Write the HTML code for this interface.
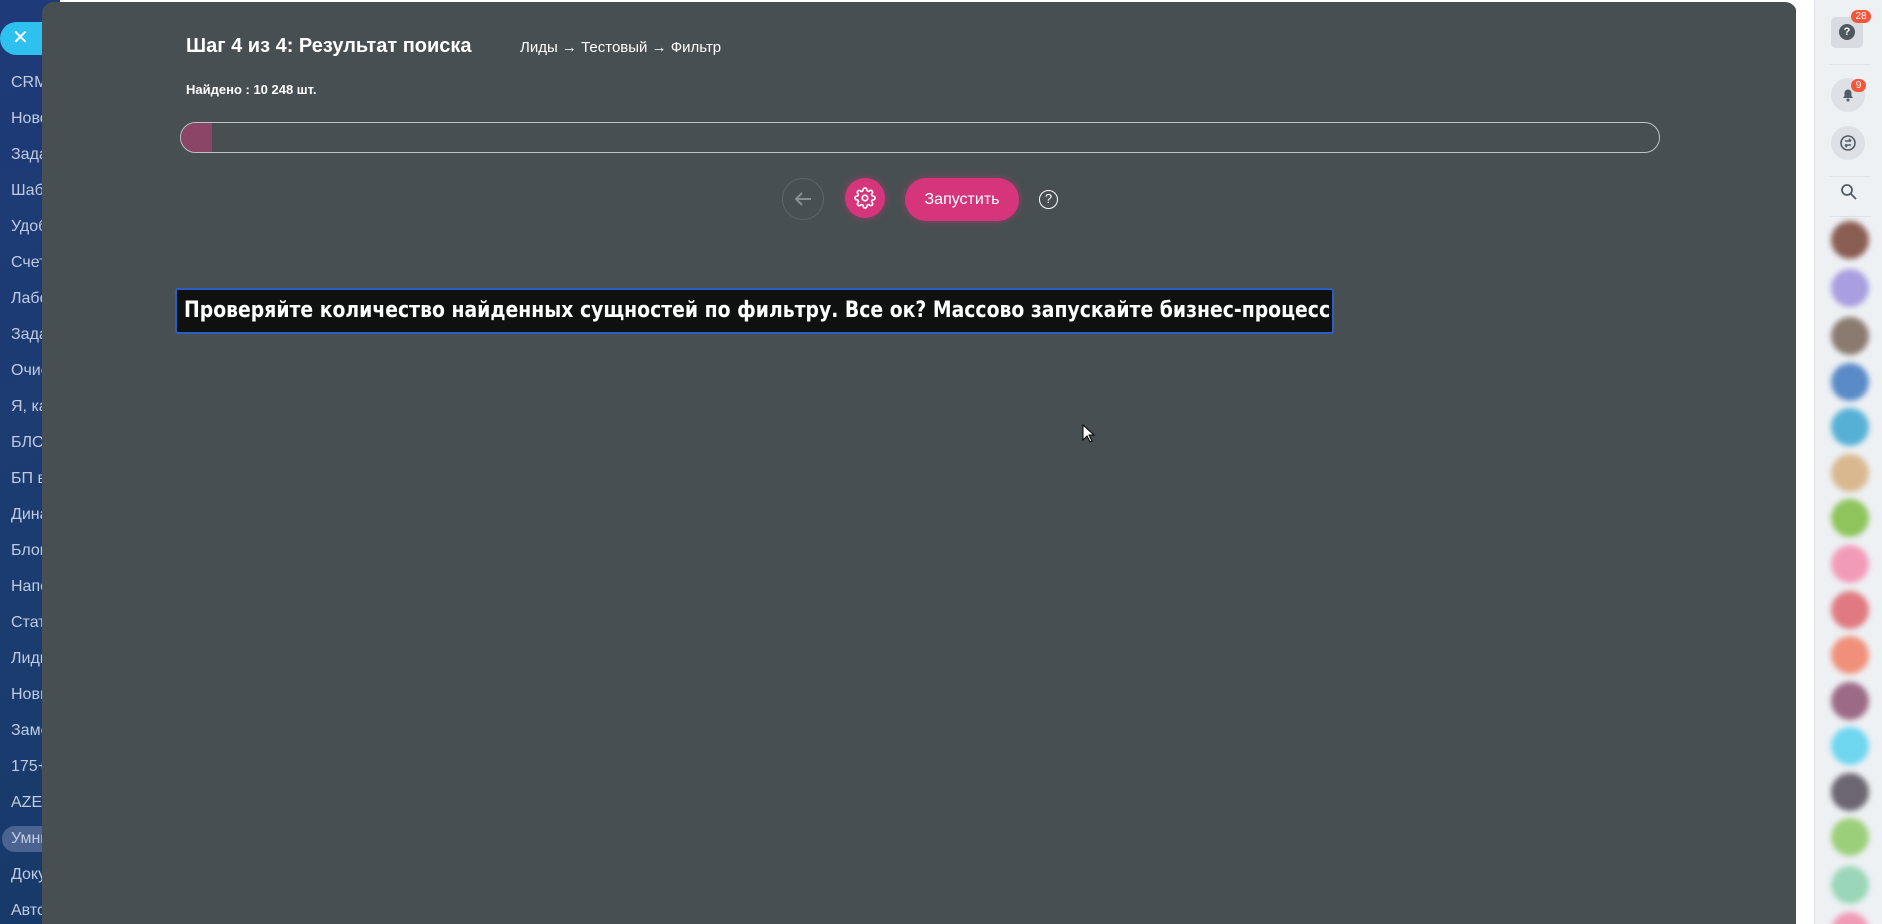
<!DOCTYPE html>
<html><head><meta charset="utf-8"><style>
*{margin:0;padding:0;box-sizing:border-box}
html,body{width:1882px;height:924px;overflow:hidden}
body{background:#fff;font-family:"Liberation Sans",sans-serif;position:relative}
.sb{position:absolute;left:0;top:0;width:60px;height:924px;background:linear-gradient(160deg,#1e3a78,#1b3c70 60%,#173a6a)}
.sb div{position:absolute;left:11px;color:#c0cbe0;font-size:16px;white-space:nowrap}
.close{position:absolute;left:0;top:22px;width:60px;height:33px;border-radius:17px;background:#2ec0ef;color:#fff;font-size:20px;padding-left:12px;line-height:33px}
.modal{position:absolute;left:42px;top:2px;width:1755px;height:922px;background:#484f52;border-radius:12px 12px 0 0}
.strip{position:absolute;left:1796px;top:0;width:18px;height:924px;background:#fff}
.rp{position:absolute;left:1814px;top:0;width:68px;height:924px;background:#eef1f4;border-left:1px solid #dde2e7;overflow:hidden}
.av{position:absolute;left:16px;width:38px;height:38px;border-radius:50%;filter:blur(3px)}
.sep{position:absolute;left:14px;width:42px;height:1px;background:#dfe3e8}
.abs{position:absolute}
</style></head><body>
<div class="sb">
<div style="top:74px">CRM</div><div style="top:110px">Новости</div><div style="top:146px">Задачи</div><div style="top:182px">Шаблоны</div><div style="top:218px">Удобно</div><div style="top:254px">Счета</div><div style="top:290px">Лаборатория</div><div style="top:326px">Задачи</div><div style="top:362px">Очистка</div><div style="top:398px">Я, как</div><div style="top:434px">БЛОГ</div><div style="top:470px">БП в</div><div style="top:506px">Динамика</div><div style="top:542px">Блоки</div><div style="top:578px">Напоминания</div><div style="top:614px">Статьи</div><div style="top:650px">Лиды</div><div style="top:686px">Новые</div><div style="top:722px">Заметки</div><div style="top:758px">175+</div><div style="top:794px">AZEX</div>
<div style="top:826px;left:2px;width:56px;height:26px;border-radius:13px;background:#4a6390"></div>
<div style="top:830px">Умные</div><div style="top:866px">Документы</div><div style="top:902px">Автоматизация</div>
</div>
<div class="close">✕</div>
<div class="modal">
<div class="abs" style="left:144px;top:33px;color:#fff;font-weight:bold;font-size:20px">Шаг 4 из 4: Результат поиска</div>
<div class="abs" style="left:478px;top:37px;color:#fff;font-size:15px">Лиды → Тестовый → Фильтр</div>
<div class="abs" style="left:144px;top:80px;color:#fff;font-weight:bold;font-size:13px">Найдено : 10 248 шт.</div>
<div class="abs" style="left:138px;top:120px;width:1480px;height:31px;border:1.5px solid #bfc3c6;border-radius:16px;overflow:hidden"><div style="width:31px;height:100%;background:#8b4566"></div></div>
<div class="abs" style="left:740px;top:176px;width:42px;height:42px;border-radius:50%;border:1px solid #5e6568"></div>
<svg class="abs" style="left:749px;top:185px" width="24" height="24" viewBox="0 0 24 24"><path d="M20 12H5M11 6l-6 6 6 6" fill="none" stroke="#8a9092" stroke-width="2"/></svg>
<div class="abs" style="left:803px;top:176px;width:40px;height:40px;border-radius:50%;background:#d6357c;box-shadow:0 0 8px rgba(214,53,124,.5)"></div>
<svg class="abs" style="left:812px;top:185px" width="22" height="22" viewBox="0 0 24 24" fill="none" stroke="#fff" stroke-width="1.8"><circle cx="12" cy="12" r="3"/><path d="M19.4 15a1.65 1.65 0 0 0 .33 1.820l.06.06a2 2 0 1 1-2.83 2.83l-.06-.06a1.65 1.65 0 0 0-1.82-.33 1.65 1.65 0 0 0-1 1.51V21a2 2 0 1 1-4 0v-.09A1.65 1.65 0 0 0 9 19.4a1.65 1.65 0 0 0-1.82.33l-.06.06a2 2 0 1 1-2.830-2.830l.06-.06A1.65 1.65 0 0 0 4.68 15a1.65 1.65 0 0 0-1.51-1H3a2 2 0 1 1 0-4h.09A1.65 1.65 0 0 0 4.6 9a1.65 1.65 0 0 0-.33-1.82l-.06-.06a2 2 0 1 1 2.83-2.83l.06.06A1.65 1.65 0 0 0 9 4.68a1.65 1.65 0 0 0 1-1.51V3a2 2 0 1 1 4 0v.09a1.65 1.65 0 0 0 1 1.51 1.65 1.65 0 0 0 1.82-.33l.06-.06a2 2 0 1 1 2.83 2.83l-.06.06A1.65 1.65 0 0 0 19.4 9a1.65 1.65 0 0 0 1.51 1H21a2 2 0 1 1 0 4h-.09a1.65 1.65 0 0 0-1.51 1z"/></svg>
<div class="abs" style="left:863px;top:176px;width:114px;height:43px;border-radius:22px;background:#d6357c;box-shadow:0 0 8px rgba(214,53,124,.5);color:#fff;font-size:16px;text-align:center;line-height:43px">Запустить</div>
<div class="abs" style="left:997px;top:188px;width:19px;height:19px;border-radius:50%;border:1.5px solid #fff;color:#fff;font-size:13px;text-align:center;line-height:16px">?</div>
<div class="abs" style="left:133px;top:286px;width:1159px;height:46px;background:#0f1110;border:2px solid #2b5fbf;border-radius:3px;color:#fff;font-family:'DejaVu Sans',sans-serif;font-weight:bold;font-size:22px;line-height:42px;padding-left:7px;white-space:nowrap;overflow:hidden"><span style="display:inline-block;transform:scaleX(.855);transform-origin:left">Проверяйте количество найденных сущностей по фильтру. Все ок? Массово запускайте бизнес-процесс</span></div>
<svg class="abs" style="left:1040px;top:422px" width="14" height="20" viewBox="0 0 14 20"><path d="M1 1v15l4-4 3 6 2-1-3-6h5z" fill="#fff" stroke="#000" stroke-width="1"/></svg>
</div>
<div class="strip"></div>
<div class="rp">
<div class="abs" style="left:16px;top:17px;width:32px;height:31px;border-radius:5px;background:#d8dce0"></div>
<div class="abs" style="left:24px;top:24px;width:16px;height:16px;border-radius:50%;background:#4f5861;color:#fff;font-size:11px;font-weight:bold;text-align:center;line-height:16px">?</div>
<div class="abs" style="left:36px;top:10px;width:20px;height:13px;border-radius:7px;background:#f4563a;color:#fff;font-size:10px;text-align:center;line-height:13px">28</div>
<div class="sep" style="top:64px"></div>
<div class="abs" style="left:16px;top:78px;width:34px;height:34px;border-radius:50%;background:#dde1e5"></div>
<svg class="abs" style="left:25px;top:86px" width="16" height="16" viewBox="0 0 16 16"><path d="M3 12h10l-1.5-2V7a3.5 3.5 0 0 0-7 0v3z" fill="#525c66"/><circle cx="8" cy="14" r="1.5" fill="#525c66"/></svg>
<div class="abs" style="left:36px;top:79px;width:15px;height:13px;border-radius:7px;background:#f4563a;color:#fff;font-size:10px;text-align:center;line-height:13px">9</div>
<div class="abs" style="left:16px;top:126px;width:34px;height:34px;border-radius:50%;background:#dde1e5"></div>
<svg class="abs" style="left:24px;top:134px" width="18" height="18" viewBox="0 0 18 18" fill="none" stroke="#525c66" stroke-width="1.6"><circle cx="9" cy="9" r="7"/><path d="M6 7h6M6 11h6M10 5l2 2M8 13l-2-2"/></svg>
<div class="sep" style="top:176px"></div>
<svg class="abs" style="left:25px;top:183px" width="18" height="18" viewBox="0 0 18 18" fill="none" stroke="#525c66" stroke-width="1.8"><circle cx="7" cy="7" r="5"/><path d="M11 11l5 5"/></svg>
<div class="sep" style="top:216px"></div>
<div class="av" style="top:221px;background:#8a5d52"></div>
<div class="av" style="top:269px;background:#a99ee0"></div>
<div class="av" style="top:317px;background:#8a7a70"></div>
<div class="av" style="top:363px;background:#5a8ac8"></div>
<div class="av" style="top:408px;background:#56b0d6"></div>
<div class="av" style="top:454px;background:#d9b890"></div>
<div class="av" style="top:499px;background:#8fc45c"></div>
<div class="av" style="top:545px;background:#f29bb8"></div>
<div class="av" style="top:591px;background:#e07a80"></div>
<div class="av" style="top:636px;background:#f0907a"></div>
<div class="av" style="top:682px;background:#9b6a86"></div>
<div class="av" style="top:727px;background:#6fd6f0"></div>
<div class="av" style="top:773px;background:#6b6670"></div>
<div class="av" style="top:818px;background:#9ccf7a"></div>
<div class="av" style="top:866px;background:#9ad6b8"></div>
<div class="av" style="top:912px;background:#f29bb8"></div>
</div>
</body></html>
